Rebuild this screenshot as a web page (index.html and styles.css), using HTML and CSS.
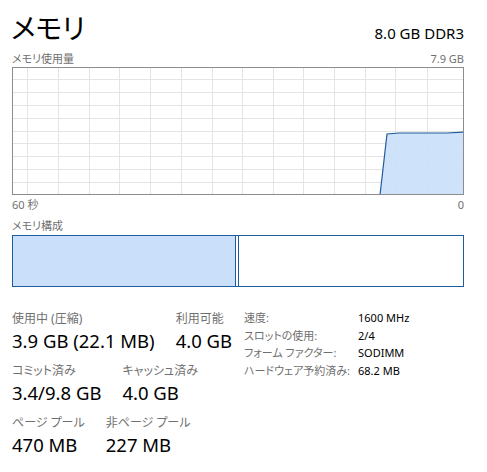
FILE: index.html
```html
<!DOCTYPE html>
<html lang="ja">
<head>
    <meta charset="UTF-8">
    <title>メモリ</title>
    <link rel="stylesheet" href="styles.css">
</head>
<body>

<div class="panel">
    <div class="header">
        <div class="title">メモリ</div>
        <div class="spec">8.0 GB DDR3</div>
    </div>

    <div class="caption">
        <span>メモリ使用量</span>
        <span>7.9 GB</span>
    </div>

    <!-- 使用量グラフ -->
    <div class="chart">
        <svg width="450" height="126" viewBox="1 1 450 126">
            <g stroke="#e4e4e4" stroke-width="1">
                <line x1="15.5" y1="0" x2="15.5" y2="128"/>
                <line x1="46.5" y1="0" x2="46.5" y2="128"/>
                <line x1="77.5" y1="0" x2="77.5" y2="128"/>
                <line x1="107.5" y1="0" x2="107.5" y2="128"/>
                <line x1="138.5" y1="0" x2="138.5" y2="128"/>
                <line x1="169.5" y1="0" x2="169.5" y2="128"/>
                <line x1="200.5" y1="0" x2="200.5" y2="128"/>
                <line x1="230.5" y1="0" x2="230.5" y2="128"/>
                <line x1="261.5" y1="0" x2="261.5" y2="128"/>
                <line x1="291.5" y1="0" x2="291.5" y2="128"/>
                <line x1="322.5" y1="0" x2="322.5" y2="128"/>
                <line x1="353.5" y1="0" x2="353.5" y2="128"/>
                <line x1="383.5" y1="0" x2="383.5" y2="128"/>
                <line x1="415.5" y1="0" x2="415.5" y2="128"/>
                <line x1="0" y1="12.5" x2="452" y2="12.5"/>
                <line x1="0" y1="25.5" x2="452" y2="25.5"/>
                <line x1="0" y1="38.5" x2="452" y2="38.5"/>
                <line x1="0" y1="51.5" x2="452" y2="51.5"/>
                <line x1="0" y1="64.5" x2="452" y2="64.5"/>
                <line x1="0" y1="76.5" x2="452" y2="76.5"/>
                <line x1="0" y1="89.5" x2="452" y2="89.5"/>
                <line x1="0" y1="102.5" x2="452" y2="102.5"/>
                <line x1="0" y1="115.5" x2="452" y2="115.5"/>
            </g>
            <polygon points="368,128 375,67 387,66 435,66 452,65 452,128" fill="#c9dffa" fill-opacity="0.9"/>
            <polyline points="368,128 375,67 387,66 435,66 452,65" fill="none" stroke="#1f5c9e" stroke-width="1.2"/>
        </svg>
    </div>

    <div class="caption axis">
        <span>60 秒</span>
        <span>0</span>
    </div>

    <div class="caption">
        <span>メモリ構成</span>
    </div>

    <!-- メモリ構成バー -->
    <div class="composition">
        <div class="part used"></div>
        <div class="part free"></div>
    </div>

    <div class="stats">
        <div class="stats-left">
            <div class="stat-row">
                <div class="stat">
                    <div class="label">使用中 (圧縮)</div>
                    <div class="value">3.9 GB (22.1 MB)</div>
                </div>
                <div class="stat">
                    <div class="label">利用可能</div>
                    <div class="value">4.0 GB</div>
                </div>
            </div>
            <div class="stat-row">
                <div class="stat">
                    <div class="label">コミット済み</div>
                    <div class="value">3.4/9.8 GB</div>
                </div>
                <div class="stat">
                    <div class="label">キャッシュ済み</div>
                    <div class="value">4.0 GB</div>
                </div>
            </div>
            <div class="stat-row">
                <div class="stat">
                    <div class="label">ページ プール</div>
                    <div class="value">470 MB</div>
                </div>
                <div class="stat">
                    <div class="label">非ページ プール</div>
                    <div class="value">227 MB</div>
                </div>
            </div>
        </div>

        <div class="details">
            <div class="key">速度:</div><div class="val">1600 MHz</div>
            <div class="key">スロットの使用:</div><div class="val">2/4</div>
            <div class="key">フォーム ファクター:</div><div class="val">SODIMM</div>
            <div class="key">ハードウェア予約済み:</div><div class="val">68.2 MB</div>
        </div>
    </div>
</div>

</body>
</html>
```

FILE: styles.css
```css
body {
    margin: 0;
    background: #ffffff;
    color: #000000;
    font-family: "Noto Sans", "Noto Sans CJK JP", sans-serif;
}

.panel {
    width: 452px;
    padding: 9px 0 0 12px;
}

.header {
    display: flex;
    justify-content: space-between;
    align-items: baseline;
    height: 41px;
}

.title {
    font-size: 28px;
    line-height: 38px;
    margin-left: -1px;
    font-feature-settings: "palt";
}

.spec {
    font-size: 15px;
}

.caption {
    display: flex;
    justify-content: space-between;
    font-size: 11px;
    line-height: 17px;
    color: #707070;
    font-feature-settings: "palt";
}

.axis {
    margin-top: 1px;
    margin-bottom: 4px;
}

.chart {
    width: 450px;
    height: 126px;
    border: 1px solid #8c8c8c;
    overflow: hidden;
}

.chart svg {
    display: block;
}

.composition {
    display: flex;
    height: 50px;
    margin-top: 1px;
    border: 1px solid #1f5c9e;
}

.part.used {
    width: 222px;
    background: #c9dffa;
    border-right: 1px solid #1f5c9e;
}

.part.free {
    flex: 1;
    border-left: 1px solid #1f5c9e;
    margin-left: 2px;
}

.stats {
    display: flex;
    margin-top: 23px;
}

.stats-left {
    width: 232px;
}

.stat-row {
    display: flex;
    gap: 21px;
    margin-bottom: 7px;
}

.label {
    font-size: 12px;
    line-height: 17px;
    color: #707070;
    font-feature-settings: "palt";
}

.value {
    font-size: 18.5px;
    line-height: 28px;
}

.details {
    display: grid;
    grid-template-columns: 114px auto;
    grid-auto-rows: 17.7px;
    font-size: 11px;
    line-height: 17.7px;
    margin-top: -1px;
}

.key {
    color: #707070;
    font-feature-settings: "palt";
}
```
